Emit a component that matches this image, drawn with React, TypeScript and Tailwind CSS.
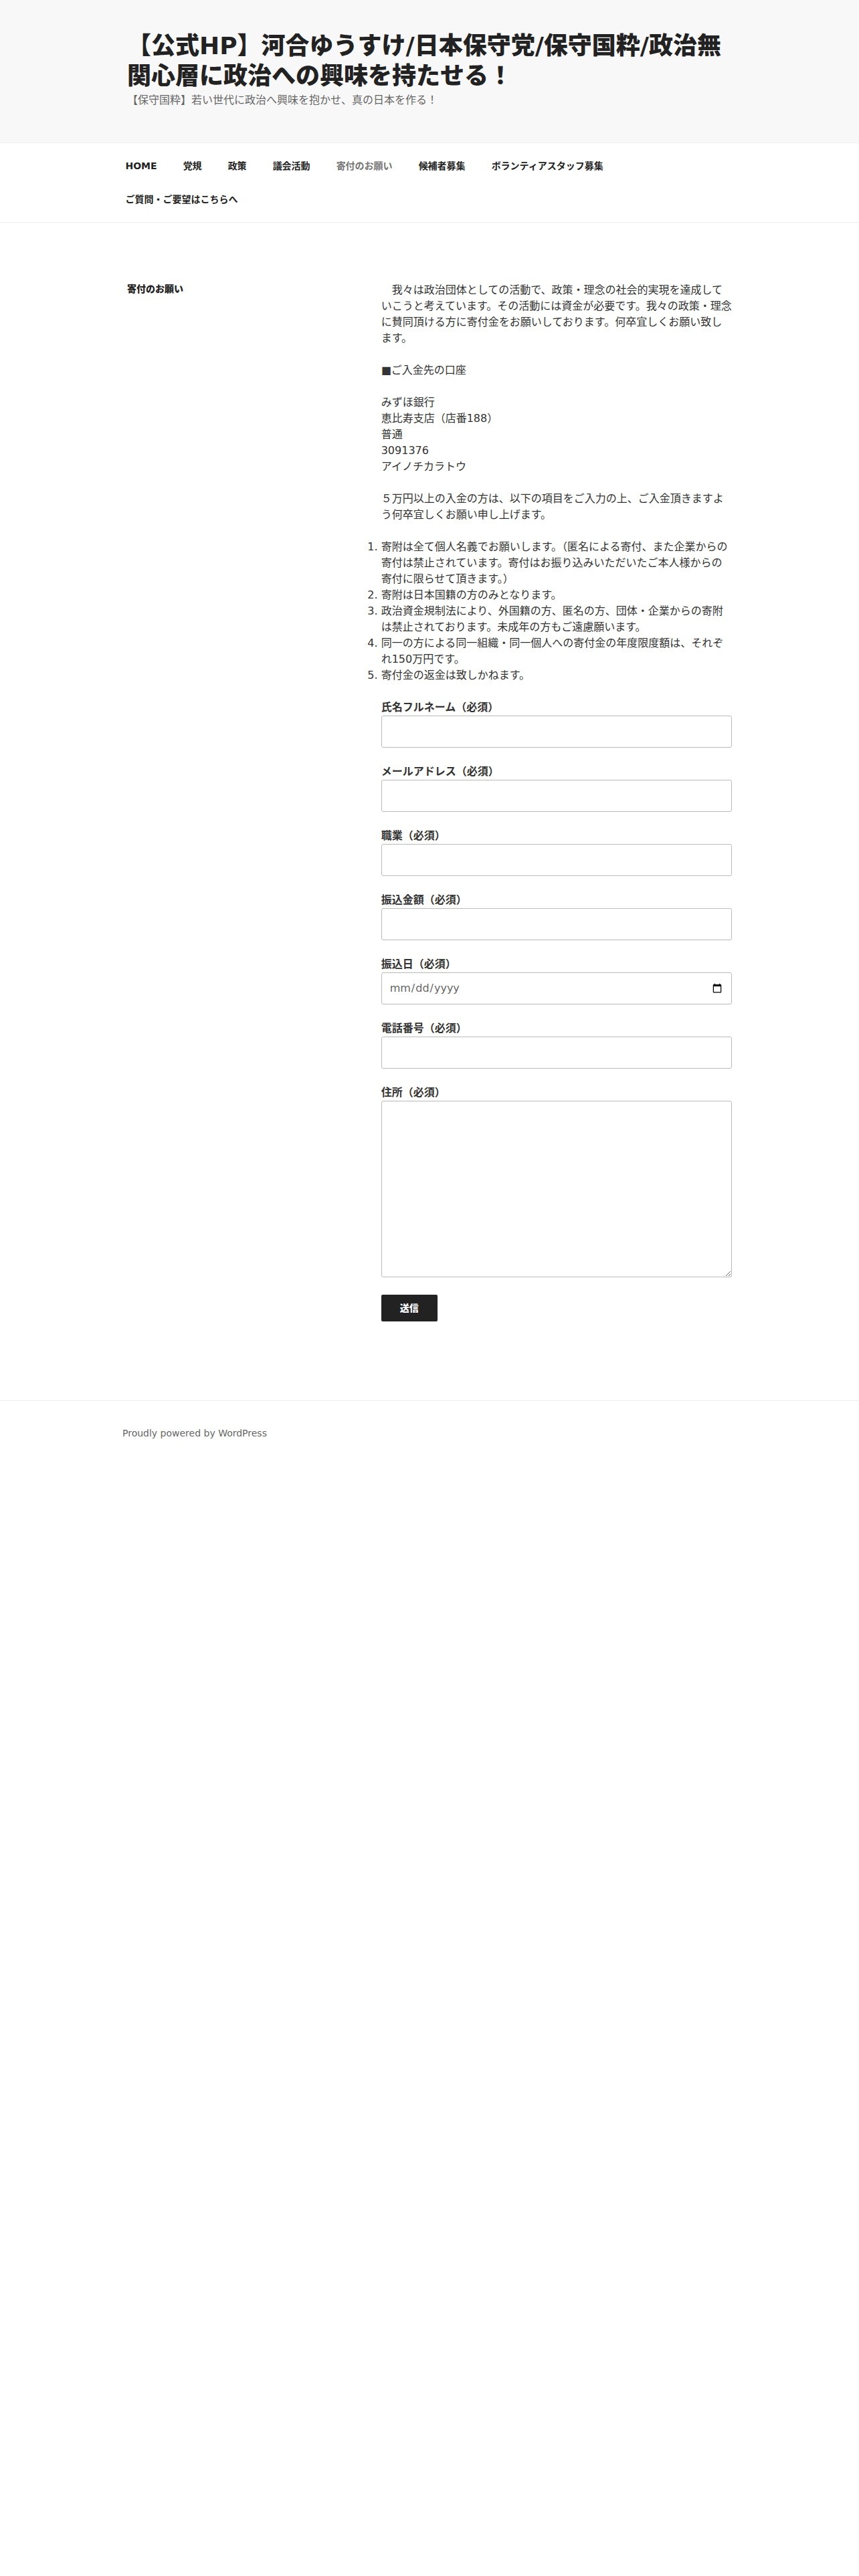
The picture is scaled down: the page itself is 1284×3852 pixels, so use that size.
import React from "react";

const navItems = [
  "HOME",
  "党規",
  "政策",
  "議会活動",
  "寄付のお願い",
  "候補者募集",
  "ボランティアスタッフ募集",
  "ご質問・ご要望はこちらへ",
];

const fields = [
  { label: "氏名フルネーム（必須）", type: "text" },
  { label: "メールアドレス（必須）", type: "email" },
  { label: "職業（必須）", type: "text" },
  { label: "振込金額（必須）", type: "text" },
  { label: "振込日（必須）", type: "date" },
  { label: "電話番号（必須）", type: "tel" },
];

const intro =
  "\u3000我々は政治団体としての活動で、政策・理念の社会的実現を達成していこうと考えています。その活動には資金が必要です。我々の政策・理念に賛同頂ける方に寄付金をお願いしております。何卒宜しくお願い致します。";

export default function App() {
  return (
    <div className="min-h-[3852px] bg-white font-['DejaVu_Sans','Noto_Sans_CJK_JP',sans-serif] text-[#333]">
      <header className="bg-[#f8f8f8]">
        <div className="mx-auto max-w-[1000px] px-12 pt-[46px] pb-[51px]">
          <h1 className="text-[36px] leading-[45px] font-extrabold text-[#222]">
            【公式HP】河合ゆうすけ/日本保守党/保守国粋/政治無関心層に政治への興味を持たせる！
          </h1>
          <p className="mt-[2px] text-[16px] leading-6 text-[#666]">
            【保守国粋】若い世代に政治へ興味を抱かせ、真の日本を作る！
          </p>
        </div>
      </header>

      <nav className="border-t border-b border-[#eee] bg-white">
        <div className="mx-auto max-w-[1000px] pl-[26px] pr-[26px] py-[9px]">
          <ul className="flex flex-wrap">
            {navItems.map((item) => (
              <li key={item}>
                <a
                  className={
                    item === "寄付のお願い"
                      ? "block px-[19.5px] py-[15px] text-[14px] leading-5 font-semibold text-[#767676]"
                      : "block px-[19.5px] py-[15px] text-[14px] leading-5 font-semibold text-[#222]"
                  }
                >
                  {item}
                </a>
              </li>
            ))}
          </ul>
        </div>
      </nav>

      <main className="mx-auto max-w-[1000px] px-12 pt-[89px] pb-[118px]">
        <div className="flex justify-between">
          <div className="w-[36%]">
            <h2 className="text-[14px] leading-5 font-extrabold text-[#222]">寄付のお願い</h2>
          </div>
          <div className="w-[58%] text-[16px] leading-6">
            <p className="mb-6">{intro}</p>
            <p className="mb-6">■ご入金先の口座</p>
            <p className="mb-6">
              みずほ銀行
              <br />
              恵比寿支店（店番188）
              <br />
              普通
              <br />
              3091376
              <br />
              アイノチカラトウ
            </p>
            <p className="mb-6">５万円以上の入金の方は、以下の項目をご入力の上、ご入金頂きますよう何卒宜しくお願い申し上げます。</p>
            <ol className="mb-6 list-decimal list-outside">
              <li>寄附は全て個人名義でお願いします。（匿名による寄付、また企業からの寄付は禁止されています。寄付はお振り込みいただいたご本人様からの寄付に限らせて頂きます。）</li>
              <li>寄附は日本国籍の方のみとなります。</li>
              <li>政治資金規制法により、外国籍の方、匿名の方、団体・企業からの寄附は禁止されております。未成年の方もご遠慮願います。</li>
              <li>同一の方による同一組織・同一個人への寄付金の年度限度額は、それぞれ150万円です。</li>
              <li>寄付金の返金は致しかねます。</li>
            </ol>
            <form>
              {fields.map((f) => (
                <div key={f.label} className="mb-6">
                  <label className="block font-bold text-[#333]">{f.label}</label>
                  <input
                    type={f.type}
                    className="block h-[48px] w-full rounded-[3px] border border-[#bbb] bg-white px-[11px] text-[16px] text-[#666]"
                  />
                </div>
              ))}
              <div className="mb-[26px]">
                <label className="block font-bold text-[#333]">住所（必須）</label>
                <textarea className="block h-[264px] w-full rounded-[3px] border border-[#bbb] bg-white p-[11px] text-[16px] text-[#666]" />
              </div>
              <button
                type="button"
                className="h-[40px] w-[84px] rounded-[2px] bg-[#222] text-[14px] leading-none font-extrabold text-white"
              >
                送信
              </button>
            </form>
          </div>
        </div>
      </main>

      <footer className="border-t border-[#eee]">
        <div className="mx-auto max-w-[1000px] pl-[41px] pt-[38px] pb-[56px]">
          <p className="text-[14px] leading-5 text-[#666]">Proudly powered by WordPress</p>
        </div>
      </footer>
    </div>
  );
}
